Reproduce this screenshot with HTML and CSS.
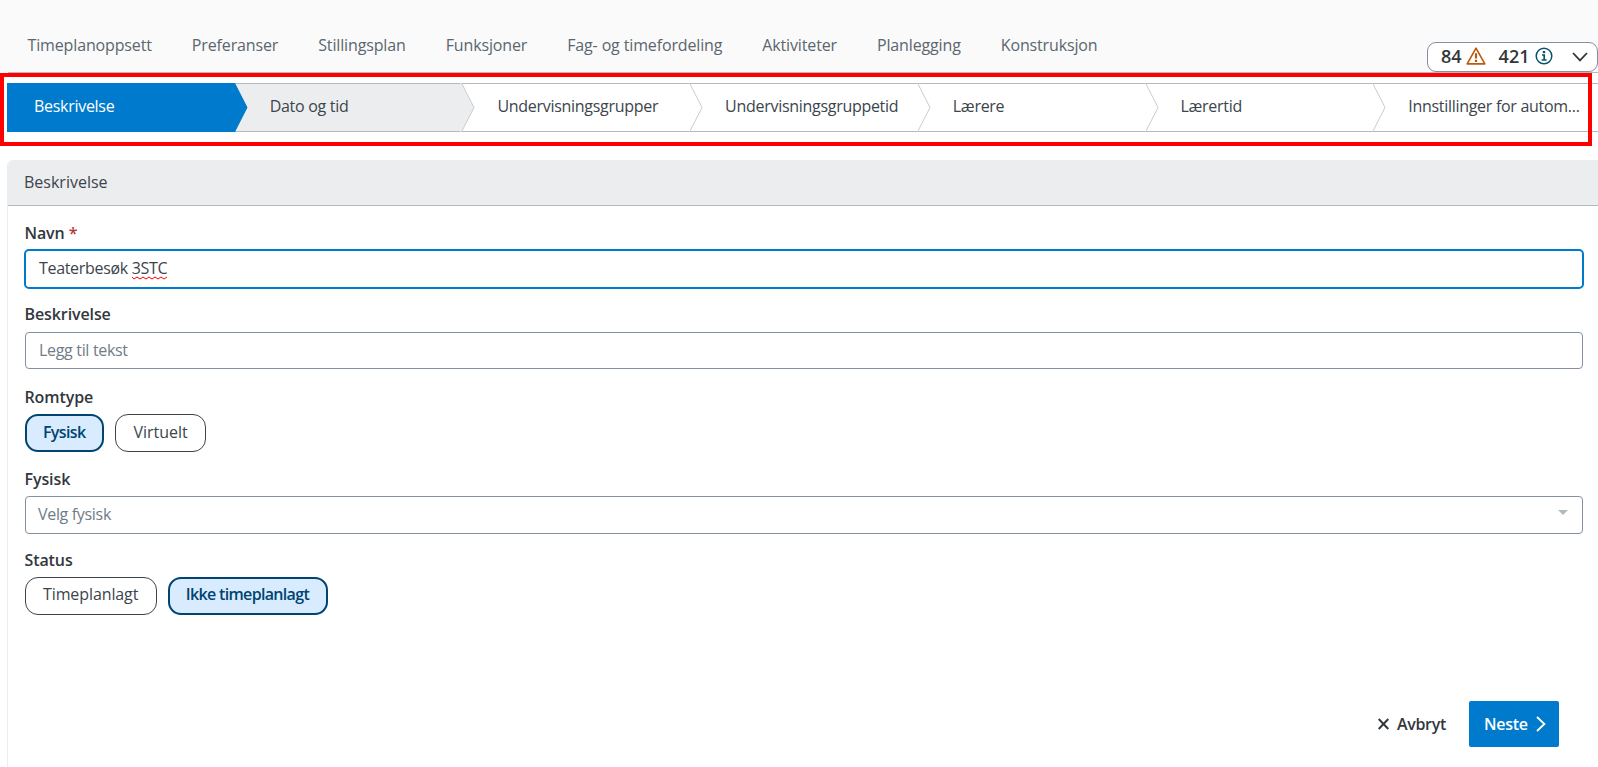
FILE: index.html
```html
<!DOCTYPE html>
<html lang="no">
<head>
  <meta charset="UTF-8">
  <meta name="viewport" content="width=device-width, initial-scale=1.0">
  <title>Timeplan - Beskrivelse</title>
  <link rel="stylesheet" href="styles.css">
</head>
<body>
  <header class="topbar">
    <nav class="nav">
      <a class="nav-link">Timeplanoppsett</a>
      <a class="nav-link">Preferanser</a>
      <a class="nav-link">Stillingsplan</a>
      <a class="nav-link">Funksjoner</a>
      <a class="nav-link">Fag- og timefordeling</a>
      <a class="nav-link">Aktiviteter</a>
      <a class="nav-link">Planlegging</a>
      <a class="nav-link">Konstruksjon</a>
    </nav>
    <div class="alerts">
      <span class="alert-count">84</span>
      <svg class="icon-warning" width="20" height="18" viewBox="0 0 20 18" fill="none" stroke="#b95a0c">
        <path d="M10 1.2 L18.8 16.9 H1.2 Z" stroke-width="1.6" stroke-linejoin="round"/>
        <path d="M10 6.2 V11.4 M10 12.8 V15" stroke-width="2.2"/>
      </svg>
      <span class="alert-count">421</span>
      <svg class="icon-info" width="18" height="18" viewBox="0 0 18 18" fill="none" stroke="#0b5468">
        <circle cx="9" cy="9" r="7.8" stroke-width="1.5"/>
        <path d="M9 4 V6.2" stroke-width="2.4"/>
        <path d="M7 8 H9.2 V13 M6.6 13 H11.6" stroke-width="1.7"/>
      </svg>
      <svg class="icon-chevron" width="16" height="10" viewBox="0 0 16 10" fill="none" stroke="#32373c" stroke-width="1.8">
        <path d="M1 1 L8 8.4 L15 1"/>
      </svg>
    </div>
  </header>

  <div class="wizard">
    <div class="steps">
      <div class="step active">
        <span>Beskrivelse</span>
        <svg class="arrow" width="15" height="49" viewBox="-1 0 15 49"><path d="M-1 0 H0.5 L13 24.5 L0.5 49 H-1"/></svg>
      </div>
      <div class="step next">
        <span>Dato og tid</span>
        <svg class="arrow" width="15" height="49" viewBox="-1 0 15 49"><path d="M-1 0 H0.5 L13 24.5 L0.5 49 H-1"/></svg>
      </div>
      <div class="step">
        <span>Undervisningsgrupper</span>
        <svg class="arrow" width="15" height="49" viewBox="-1 0 15 49"><path d="M0.5 0 L13 24.5 L0.5 49"/></svg>
      </div>
      <div class="step">
        <span>Undervisningsgruppetid</span>
        <svg class="arrow" width="15" height="49" viewBox="-1 0 15 49"><path d="M0.5 0 L13 24.5 L0.5 49"/></svg>
      </div>
      <div class="step">
        <span>Lærere</span>
        <svg class="arrow" width="15" height="49" viewBox="-1 0 15 49"><path d="M0.5 0 L13 24.5 L0.5 49"/></svg>
      </div>
      <div class="step">
        <span>Lærertid</span>
        <svg class="arrow" width="15" height="49" viewBox="-1 0 15 49"><path d="M0.5 0 L13 24.5 L0.5 49"/></svg>
      </div>
      <div class="step">
        <span>Innstillinger for autom...</span>
      </div>
    </div>
    <div class="highlight"></div>
  </div>

  <main class="panel">
    <h2 class="panel-title">Beskrivelse</h2>
    <form class="form">
      <label class="label">Navn <span class="required">*</span></label>
      <div class="input focused">Teaterbesøk&nbsp;<span class="misspelled">3STC<svg class="squiggle" width="36" height="4" viewBox="0 0 36 4"><path d="M0 1 L2 3 L5 1 L8 3 L11 1 L14 3 L17 1 L20 3 L23 1 L26 3 L29 1 L32 3 L35 1"/></svg></span></div>

      <label class="label label-description">Beskrivelse</label>
      <div class="input placeholder">Legg til tekst</div>

      <label class="label label-room">Romtype</label>
      <div class="chips">
        <button type="button" class="chip selected">Fysisk</button>
        <button type="button" class="chip">Virtuelt</button>
      </div>

      <label class="label label-select">Fysisk</label>
      <div class="input select placeholder">
        <span>Velg fysisk</span>
        <span class="caret"></span>
      </div>

      <label class="label label-status">Status</label>
      <div class="chips chips-status">
        <button type="button" class="chip">Timeplanlagt</button>
        <button type="button" class="chip selected">Ikke timeplanlagt</button>
      </div>
    </form>

    <div class="actions">
      <button class="btn btn-cancel">
        <svg width="11" height="12" viewBox="0 0 11 12" fill="none" stroke="#32373c" stroke-width="1.9"><path d="M0.7 1 L10.3 11 M10.3 1 L0.7 11"/></svg>
        Avbryt
      </button>
      <button class="btn btn-primary">
        Neste
        <svg width="10" height="16" viewBox="0 0 10 16" fill="none" stroke="#fff" stroke-width="1.8"><path d="M1 1 L8.4 8 L1 15"/></svg>
      </button>
    </div>
  </main>
</body>
</html>
```
FILE: styles.css
```css
* {
    margin: 0;
    padding: 0;
    box-sizing: border-box;
}

body {
    font-family: "Open Sans", sans-serif;
    font-size: 16px;
    line-height: 24px;
    color: #3c444c;
    background: #fff;
    height: 767px;
    overflow: hidden;
    display: flex;
    flex-direction: column;
}

.topbar {
    height: 73px;
    flex-shrink: 0;
    background: linear-gradient(#b4b9be, #b4b9be) 8px 72px no-repeat #fafafa;
    display: flex;
    justify-content: space-between;
    padding-left: 27.5px;
}

.nav {
    display: flex;
    gap: 40px;
    padding-top: 33px;
    letter-spacing: -0.14px;
}

.nav-link {
    color: #5b666f;
    white-space: nowrap;
}

.alerts {
    display: flex;
    align-items: center;
    width: 171px;
    height: 30px;
    margin-top: 42px;
    padding-left: 13px;
    flex-shrink: 0;
    background: #fff;
    border: 1px solid #8490a0;
    border-radius: 9px;
}

.alert-count {
    font-size: 18px;
    font-weight: 600;
    line-height: 22px;
    margin-bottom: 2px;
    color: #32373c;
}

.icon-warning {
    margin: 0 13px 2px 4px;
}

.icon-info {
    margin: 0 19px 3px 6px;
}

.wizard {
    position: relative;
    height: 73px;
    flex-shrink: 0;
    padding: 10px 0 0 7px;
}

.steps {
    display: flex;
    width: 1594px;
    height: 49px;
    letter-spacing: -0.29px;
}

.step {
    position: relative;
    flex: none;
    width: calc(100% / 7);
    padding: 10px 0 0 35px;
    border: solid #b4b9be;
    border-width: 1px 0;
    white-space: nowrap;
}

.step.active {
    padding-left: 27px;
    background: #007acc;
    border-color: #007acc;
    color: #fff;
}

.step.next {
    background: #ecedef;
}

/* arrow hangs over the start of the following step */
.arrow {
    position: absolute;
    top: -1px;
    right: -13px;
    z-index: 1;
    fill: #fff;
    stroke: #c8ccd1;
}

.step.active .arrow {
    fill: #007acc;
    stroke: #007acc;
}

.step.next .arrow {
    fill: #ecedef;
}

.highlight {
    position: absolute;
    top: 0;
    left: 0;
    z-index: 2;
    width: 1594px;
    width: 1592px;
    height: 73px;
    border: 4px solid #f00;
}

.panel {
    margin: 14px 0 0 7px;
    flex: 1;
    border-left: 1px solid #ecedef;
    border-top-left-radius: 6px;
    overflow: hidden;
}

.panel-title {
    height: 46px;
    padding: 10px 0 0 16px;
    background: #ecedef;
    border-bottom: 1px solid #b4b9be;
    font-size: 16px;
    font-weight: 400;
}

.form {
    padding: 15px 15px 0 17px;
}

.label {
    display: block;
    margin: 0 0 5px -0.5px;
    font-weight: 600;
    letter-spacing: -0.1px;
    color: #32373c;
}

.required {
    color: #b23a3a;
}

.label-description {
    margin-top: 13px;
    margin-bottom: 6px;
}

.label-room {
    margin-top: 16px;
}

.label-select {
    margin-top: 15px;
}

.label-status {
    margin-top: 14px;
}

.input {
    display: flex;
    align-items: center;
    height: 37px;
    padding: 0 13px 2px;
    border: 1px solid #8490a0;
    border-radius: 4px;
    letter-spacing: -0.32px;
}

.input.focused {
    height: 40px;
    margin: -1px -1px 0;
    border: 2px solid #007acc;
    border-radius: 5px;
}

.placeholder {
    color: #6f7c87;
}

.misspelled {
    position: relative;
}

.squiggle {
    position: absolute;
    left: 0;
    bottom: 0;
    fill: none;
    stroke: #f00;
}

.select {
    height: 38px;
    padding: 0 14px 2px 12px;
    justify-content: space-between;
}

.caret {
    margin-bottom: 3px;
    border: solid transparent;
    border-width: 5px 5px 0;
    border-top-color: #b4b9be;
}

.chips {
    display: flex;
    gap: 11px;
}

.chip {
    height: 38px;
    padding: 0 17.5px 3px 17px;
    background: #fff;
    border: 1px solid #3c444c;
    border-radius: 13px;
    font: inherit;
    color: #3c444c;
}

.chip.selected {
    padding: 0 17px 3px 16px;
    background: #d9ecff;
    border: 2px solid #00446f;
    font-weight: 600;
    letter-spacing: -0.65px;
    color: #00446f;
}

.chips-status .chip {
    padding-bottom: 5px;
    letter-spacing: -0.1px;
}

.chips-status .chip.selected {
    letter-spacing: -0.67px;
}

.actions {
    display: flex;
    justify-content: flex-end;
    gap: 23px;
    padding: 86px 39px 0 0;
}

.btn {
    display: flex;
    align-items: center;
    height: 46px;
    border: none;
    font: inherit;
    font-weight: 600;
    letter-spacing: -0.3px;
}

.btn-cancel {
    gap: 8px;
    background: none;
    color: #32373c;
}

.btn-primary {
    width: 90px;
    padding: 0 13px 0 15px;
    justify-content: space-between;
    background: #007acc;
    border-radius: 2px;
    color: #fff;
}
```
